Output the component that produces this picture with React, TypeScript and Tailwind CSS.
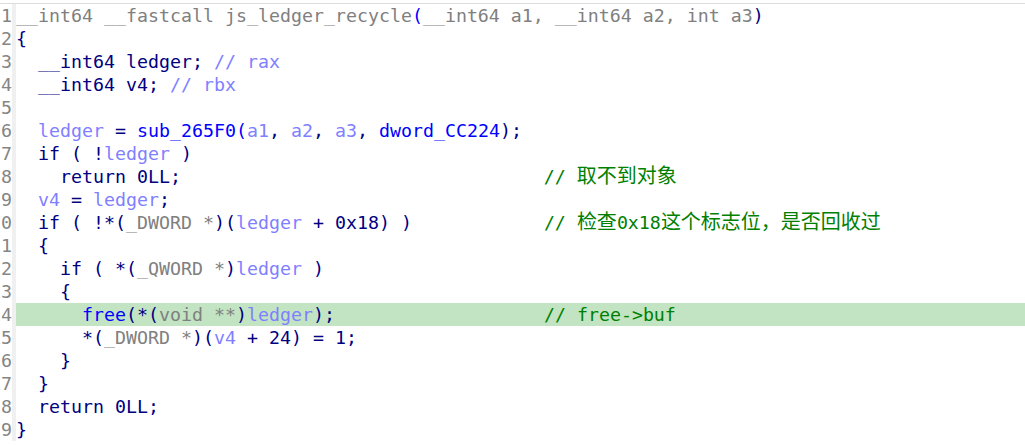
import React from 'react';

type Tok = [string, string];

const N = 'text-[#000080]';
const V = 'text-[#7f7fff]';
const F = 'text-[#0000ff]';
const G = 'text-[#808080]';
const C = 'text-[#008000]';

// comments on the right start at column 48
const COMMENT_COL = 48;

const lines: { toks: Tok[]; comment?: React.ReactNode; hl?: boolean }[] = [
  {
    toks: [
      ['__int64 __fastcall js_ledger_recycle', G],
      ['(', F],
      ['__int64 a1, __int64 a2, int a3', G],
      [')', N],
    ],
  },
  { toks: [['{', N]] },
  { toks: [['  __int64 ledger; ', N], ['// rax', V]] },
  { toks: [['  __int64 v4; ', N], ['// rbx', V]] },
  { toks: [] },
  {
    toks: [
      ['  ', N],
      ['ledger', V],
      [' = ', N],
      ['sub_265F0(', F],
      ['a1', V],
      [', ', N],
      ['a2', V],
      [', ', N],
      ['a3', V],
      [', ', N],
      ['dword_CC224', F],
      [');', N],
    ],
  },
  { toks: [['  if ( !', N], ['ledger', V], [' )', N]] },
  {
    toks: [['    return 0LL;', N]],
    comment: (
      <>
        {'// '}
        <span className="text-[20px]">取不到对象</span>
      </>
    ),
  },
  { toks: [['  ', N], ['v4', V], [' = ', N], ['ledger', V], [';', N]] },
  {
    toks: [
      ['  if ( !*(', N],
      ['_DWORD *', G],
      [')(', N],
      ['ledger', V],
      [' + 0x18) )', N],
    ],
    comment: (
      <>
        {'// '}
        <span className="text-[20px]">检查</span>
        0x18
        <span className="text-[20px]">这个标志位，是否回收过</span>
      </>
    ),
  },
  { toks: [['  {', N]] },
  { toks: [['    if ( *(', N], ['_QWORD *', G], [')', N], ['ledger', V], [' )', N]] },
  { toks: [['    {', N]] },
  {
    toks: [
      ['      ', N],
      ['free', F],
      ['(*(', N],
      ['void **', G],
      [')', N],
      ['ledger', V],
      [');', N],
    ],
    comment: '// free->buf',
    hl: true,
  },
  { toks: [['      *(', N], ['_DWORD *', G], [')(', N], ['v4', V], [' + 24) = 1;', N]] },
  { toks: [['    }', N]] },
  { toks: [['  }', N]] },
  { toks: [['  return 0LL;', N]] },
  { toks: [['}', N]] },
];

const gap = (toks: Tok[]) => {
  const len = toks.reduce((n, t) => n + t[0].length, 0);
  return ' '.repeat(Math.max(1, COMMENT_COL - len));
};

export default function App() {
  return (
    <div
      className="w-[1025px] h-[445px] bg-white overflow-hidden"
      style={{ fontFamily: '"DejaVu Sans Mono", "Noto Sans CJK SC", monospace' }}
    >
      <div className="h-[3px]" />
      <div className="h-px bg-[#dcdcdc]" />
      <div className="flex flex-col text-[18.27px] leading-[23px]">
        {lines.map((ln, i) => (
          <div key={i} className="flex h-[23px]">
            <div className="w-[12px] overflow-hidden flex justify-end text-[#858585] whitespace-pre">
              <span>{i + 1}</span>
            </div>
            <div className="w-[4px] bg-[#f0f0f0]" />
            <div className={`flex-1 whitespace-pre ${ln.hl ? 'bg-[#c2e4c2]' : ''}`}>
              {ln.toks.map((t, j) => (
                <span key={j} className={t[1]}>
                  {t[0]}
                </span>
              ))}
              {ln.comment && (
                <>
                  <span>{gap(ln.toks)}</span>
                  <span className={C}>{ln.comment}</span>
                </>
              )}
            </div>
          </div>
        ))}
      </div>
    </div>
  );
}
